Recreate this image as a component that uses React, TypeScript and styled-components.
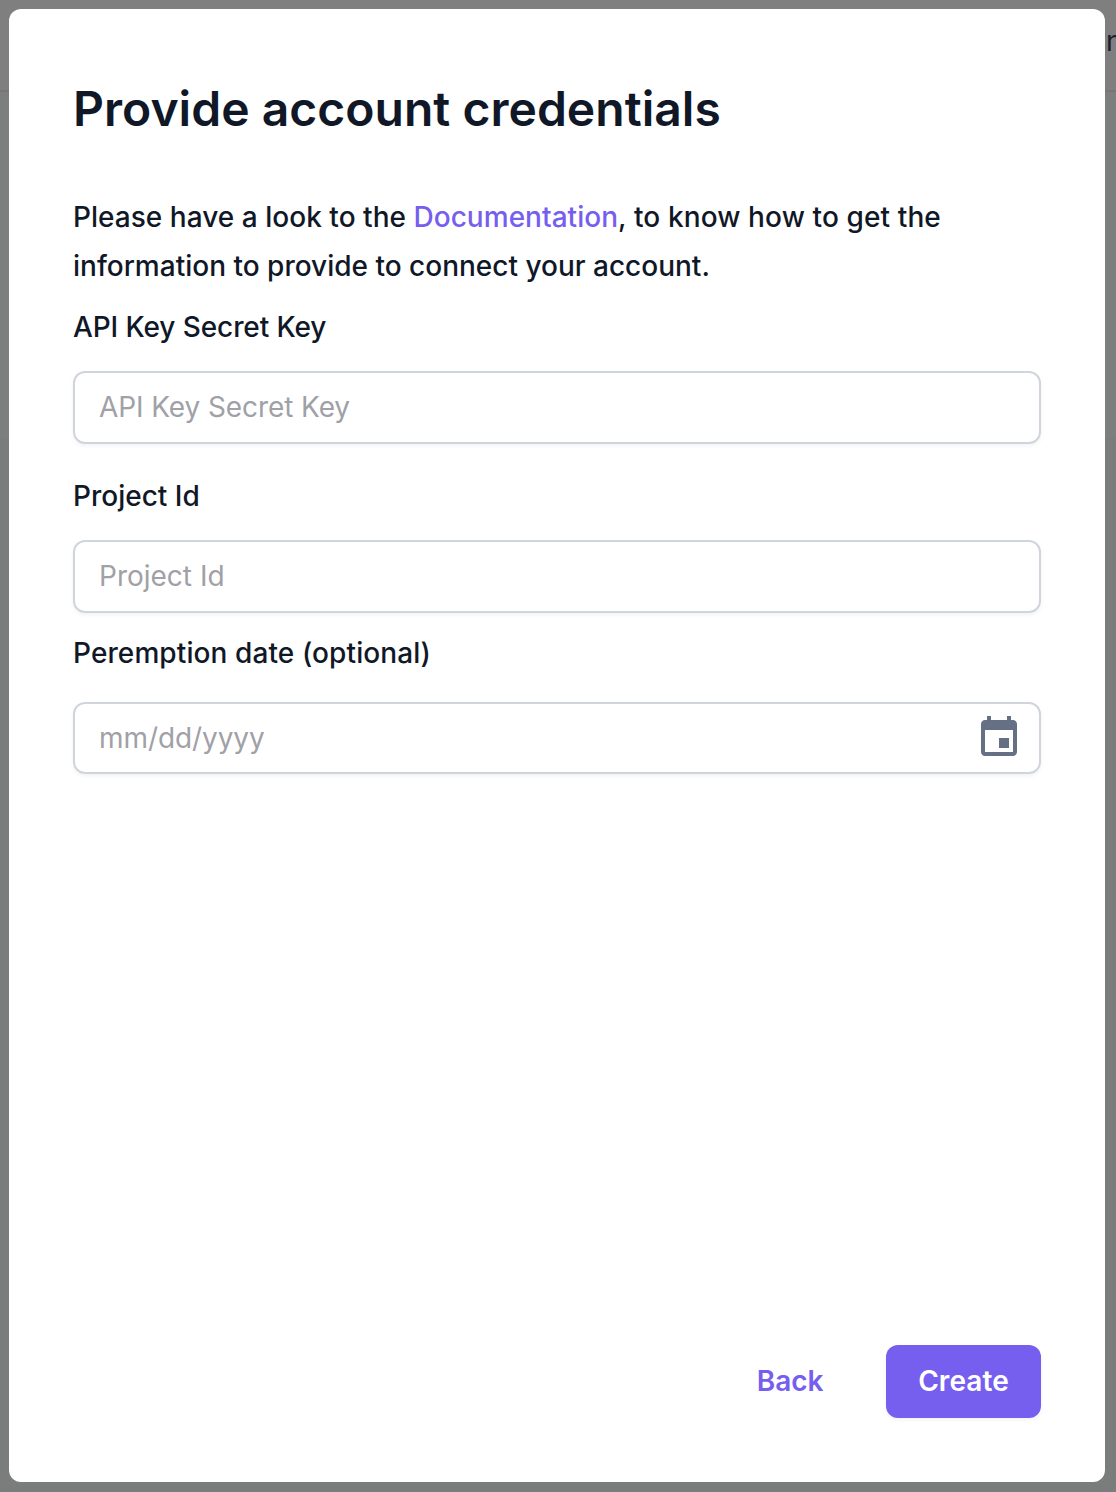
import React from "react";
import styled, { createGlobalStyle } from "styled-components";

const GlobalStyle = createGlobalStyle`
  * { box-sizing: border-box; }
  body { margin: 0; overflow: hidden; background: #7f7f7f; font-family: Inter, "Liberation Sans", sans-serif; color: #101828; -webkit-font-smoothing: antialiased; }
`;

const Page = styled.div`
  position: relative;
  width: 1116px;
  height: 1492px;
  padding: 9px 11px 10px 9px;
  background: linear-gradient(#7f7f7f 0 90px, #757678 90px 92px, #7d7e7e 92px 438px, #7b7c7c 438px);
`;

const PageTitle = styled.span`
  position: absolute;
  top: 24px;
  left: 1106px;
  font-size: 28px;
  line-height: 34px;
  color: #1b202c;
`;

const Dialog = styled.main`
  position: relative;
  display: flex;
  flex-direction: column;
  height: 100%;
  padding: 64px;
  border-radius: 12px;
  background: #fff;
`;

const Title = styled.h1`
  margin: 0;
  font-size: 48px;
  font-weight: 600;
  line-height: 72px;
  letter-spacing: 0.03px;
`;

const Intro = styled.p`
  margin: 48px 0 0;
  font-size: 28px;
  font-weight: 500;
  line-height: 49px;
`;

const IntroLine = styled.span<{ $spacing: number }>`
  display: block;
  letter-spacing: ${(p) => p.$spacing}px;
`;

const IntroTail = styled.span`
  letter-spacing: 0.11px;
`;

const DocLink = styled.a`
  color: #765eef;
`;

const Field = styled.div<{ $top: number; $gap: number }>`
  display: flex;
  flex-direction: column;
  gap: ${(p) => p.$gap}px;
  margin-top: ${(p) => p.$top}px;
`;

const Label = styled.label<{ $spacing?: number }>`
  font-size: 28px;
  font-weight: 500;
  line-height: 40px;
  letter-spacing: ${(p) => p.$spacing ?? 0}px;
`;

const InputBox = styled.div<{ $height: number }>`
  display: flex;
  align-items: center;
  height: ${(p) => p.$height}px;
  padding: 0 16px 0 24px;
  border: 2px solid #d0d5dd;
  border-radius: 12px;
  box-shadow: 0 2px 4px rgba(16, 24, 40, 0.05);
`;

const Input = styled.input<{ $spacing?: number }>`
  flex: 1;
  min-width: 0;
  height: 40px;
  margin-bottom: 1px;
  padding: 0;
  border: 0;
  outline: 0;
  background: transparent;
  font: 400 28px/40px Inter, "Liberation Sans", sans-serif;
  letter-spacing: ${(p) => p.$spacing ?? 0}px;
  color: #101828;
  &::placeholder { color: #9fa1a7; opacity: 1; }
`;

const CalendarIcon = styled.svg`
  width: 48px;
  height: 48px;
  fill: #667085;
`;

const Actions = styled.footer`
  display: flex;
  justify-content: flex-end;
  gap: 30.5px;
  margin-top: auto;
`;

const Button = styled.button<{ $primary?: boolean }>`
  height: 73px;
  min-width: ${(p) => (p.$primary ? "155px" : "0")};
  padding: 0 32px 2px;
  border: 0;
  border-radius: 12px;
  background: ${(p) => (p.$primary ? "#765eef" : "transparent")};
  box-shadow: ${(p) => (p.$primary ? "0 2px 4px rgba(16, 24, 40, 0.05)" : "none")};
  color: ${(p) => (p.$primary ? "#fff" : "#765eef")};
  font: 600 28px/40px Inter, "Liberation Sans", sans-serif;
  letter-spacing: ${(p) => (p.$primary ? "0.08px" : "0")};
`;

export default function App() {
  return (
    <>
      <GlobalStyle />
      <Page>
        <PageTitle>n</PageTitle>
        <Dialog>
          <Title>Provide account credentials</Title>
          <Intro>
            <IntroLine $spacing={0.03}>
              Please have a look to the <DocLink>Documentation</DocLink>
              <IntroTail>, to know how to get the</IntroTail>
            </IntroLine>
            <IntroLine $spacing={0}>information to provide to connect your account.</IntroLine>
          </Intro>
          <Field $top={16} $gap={24}>
            <Label htmlFor="secret" $spacing={-0.1}>API Key Secret Key</Label>
            <InputBox $height={73}>
              <Input id="secret" placeholder="API Key Secret Key" $spacing={-0.09} />
            </InputBox>
          </Field>
          <Field $top={32} $gap={24}>
            <Label htmlFor="project">Project Id</Label>
            <InputBox $height={73}>
              <Input id="project" placeholder="Project Id" />
            </InputBox>
          </Field>
          <Field $top={20} $gap={29}>
            <Label htmlFor="date" $spacing={0.1}>Peremption date (optional)</Label>
            <InputBox $height={72}>
              <Input id="date" placeholder="mm/dd/yyyy" $spacing={-0.08} />
              <CalendarIcon viewBox="0 0 24 24">
                <path d="M17 12h-5v5h5v-5zM16 1v2H8V1H6v2H5c-1.11 0-1.99.9-1.99 2L3 19c0 1.1.89 2 2 2h14c1.1 0 2-.9 2-2V5c0-1.1-.9-2-2-2h-1V1h-2zm3 18H5V8h14v11z" />
              </CalendarIcon>
            </InputBox>
          </Field>
          <Actions>
            <Button type="button">Back</Button>
            <Button type="button" $primary>Create</Button>
          </Actions>
        </Dialog>
      </Page>
    </>
  );
}
